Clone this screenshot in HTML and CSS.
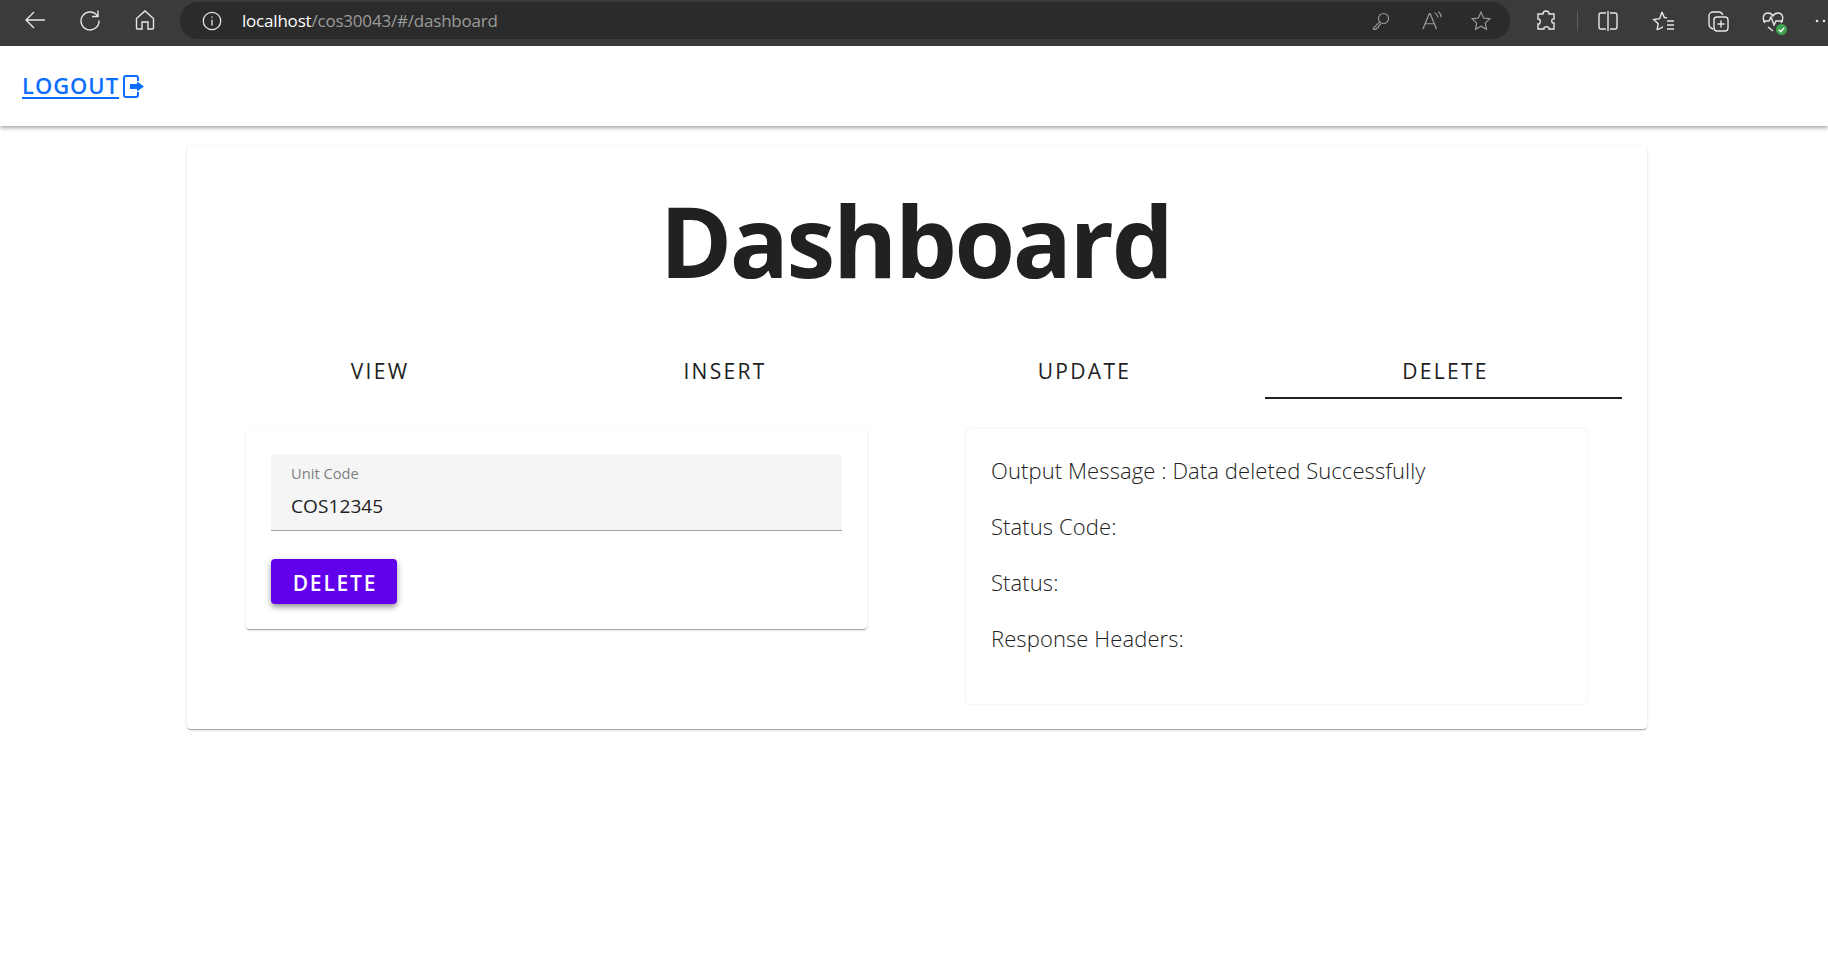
FILE: index.html
```html
<!DOCTYPE html>
<html lang="en">
<head>
<meta charset="utf-8">
<title>Dashboard</title>
<link rel="stylesheet" href="styles.css">
</head>
<body>
<header class="browser">
  <div class="nav-icons">
    <svg class="ico" viewBox="0 0 24 24"><path d="M22 12H3M11 4l-8 8 8 8"/></svg>
    <svg class="ico" viewBox="0 0 24 24"><path d="M19.5 8A9 9 0 1 0 21 12.5M20 2.500V8.500H14"/></svg>
    <svg class="ico" viewBox="0 0 24 24"><path d="M3.500 10.500L12 3l8.500 7.500V20a1 1 0 0 1-1 1H15v-7H9v7H4.500a1 1 0 0 1-1-1z"/></svg>
  </div>
  <div class="omnibox">
    <svg class="ico info" viewBox="0 0 24 24"><circle cx="12" cy="12" r="9.500"/><path d="M12 10.500V17M12 7v1.500"/></svg>
    <span class="url"><span class="host">localhost</span>/cos30043/#/dashboard</span>
    <div class="omni-actions">
      <svg class="ico dim small key" viewBox="0 0 24 24"><circle cx="15" cy="9" r="6"/><path d="M10.500 13L3 20.500V22h3l1-2h2v-2l3-2.500M16.500 7.500v.01"/></svg>
      <svg class="ico dim" viewBox="0 0 24 24"><path d="M2 21L9 4h1l7 17M5 15h10M15 3c2 1 3 3 3.500 5M19 2c2 1.500 3 4 3 6"/></svg>
      <svg class="ico dim" viewBox="0 0 24 24"><path d="M12 2.500l2.900 6.300 6.800.8-5 4.700 1.300 6.800-6-3.400-6 3.400 1.300-6.800-5-4.700 6.800-.8z"/></svg>
    </div>
  </div>
  <div class="tools">
    <svg class="ico tool-puzzle" viewBox="0 0 24 24"><path d="M9 5c0-4 6-4 6 0h5v5c-3-1-3 5 0 4v6h-5c1-3-6-3-5 0H4v-5c3 1 3-6 0-5V5z"/></svg>
    <span class="sep"></span>
    <svg class="ico tool-split" viewBox="0 0 24 24"><path d="M12 2v20M10 4H5a2 2 0 0 0-2 2v12a2 2 0 0 0 2 2h5M14 4h5a2 2 0 0 1 2 2v12a2 2 0 0 1-2 2h-5"/></svg>
    <svg class="ico tool-fav" viewBox="0 0 24 24"><path d="M10 3l2.300 5.500 2.700.2M5 21l1.200-6.200-4.500-4.300 6-.8L10 3M5 21l6-3.200M15 12h7M15 16h7M15 20h7"/></svg>
    <svg class="ico tool-coll" viewBox="0 0 24 24"><path d="M7 20C4 19 3 17 3 15V7a4 4 0 0 1 4-4h6c2 0 3 1 4 3"/><rect x="8" y="8" width="14" height="14" rx="3"/><path d="M15 11.500v7M11.500 15h7"/></svg>
    <span class="health">
      <svg class="ico" viewBox="0 0 24 24"><path d="M4 14C1 10 2 4 7 4c2 0 4 1 5 3 1-2 3-3 5-3 5 0 6 6 3 10M2 12h6l2-4 3 8 2-4h7M7 18l5 4"/></svg>
      <svg class="check" viewBox="0 0 10 10"><circle cx="5" cy="5" r="5"/><path d="M2.500 5.200l1.800 1.800 3.200-3.600"/></svg>
    </span>
    <svg class="dots" viewBox="0 0 12 4"><circle cx="2" cy="2" r="1.300"/><circle cx="9" cy="2" r="1.300"/></svg>
  </div>
</header>

<nav class="topnav">
  <a class="logout" href="#">LOGOUT</a>
  <svg class="logout-icon" viewBox="0 0 21 23"><path class="frame" d="M15 6V3A2 2 0 0 0 13 1H3A2 2 0 0 0 1 3v17a2 2 0 0 0 2 2h10a2 2 0 0 0 2-2v-3"/><path class="arrow" d="M7 9h7V6.500l7 5-7 5V14H7z"/></svg>
</nav>

<main class="page">
  <section class="card">
    <h1 class="title">Dashboard</h1>
    <div class="tabs">
      <div class="tab">VIEW</div>
      <div class="tab">INSERT</div>
      <div class="tab tab-update">UPDATE</div>
      <div class="tab tab-delete active">DELETE</div>
    </div>
    <div class="panels">
      <form class="panel form-panel">
        <div class="field">
          <span class="field-label">Unit Code</span>
          <span class="field-value">COS12345</span>
        </div>
        <span class="btn">DELETE</span>
      </form>
      <div class="panel output-panel">
        <p>Output Message : Data deleted Successfully</p>
        <p>Status Code:</p>
        <p>Status:</p>
        <p>Response Headers:</p>
      </div>
    </div>
  </section>
</main>
</body>
</html>
```

FILE: styles.css
```css
* { box-sizing: border-box; }
html, body { margin: 0; padding: 0; height: 100%; overflow: hidden; }
body { background: #fff; font-family: "Open Sans", sans-serif; color: #212121; }

.browser {
  height: 46px;
  background: #3b3b3b;
  display: flex;
  align-items: flex-start;
  padding-top: 2px;
  overflow: hidden;
  white-space: nowrap;
}
.ico { width: 24px; height: 24px; fill: none; stroke: #e6e6e6; stroke-width: 1.4; flex: none; }
.nav-icons { display: flex; gap: 31px; width: 180px; flex: none; padding: 6px 0 0 23px; }
.omnibox {
  width: 1330px;
  height: 37px;
  background: #2b2b2b;
  border-radius: 18px;
  display: flex;
  align-items: center;
  padding-left: 21px;
  flex: none;
}
.info { width: 22px; height: 22px; }
.url {
  margin-left: 19px;
  font-family: "Open Sans", sans-serif;
  font-size: 17px;
  letter-spacing: -0.2px;
  color: #9c9c9c;
}
.host { color: #fff; }
.omni-actions { margin-left: auto; display: flex; align-items: center; gap: 27px; padding-right: 18px; }
.key { margin-right: 3px; }
.dim { stroke: #9a9a9a; width: 22px; height: 22px; stroke-width: 1.3; }
.small { width: 20px; height: 20px; }
.tools { display: flex; align-items: center; height: 37px; padding-left: 24px; flex: none; }
.tool-puzzle { margin-right: 19px; }
.sep { width: 1px; height: 20px; background: #5f5f5f; margin-right: 18px; }
.tool-split { margin-right: 32px; }
.tool-fav { margin-right: 30px; }
.tool-coll { margin-right: 31px; }
.health { position: relative; display: block; width: 24px; height: 24px; margin-right: 30px; }
.check { position: absolute; right: -2px; bottom: -2px; width: 11px; height: 11px; }
.check circle { fill: #3fa34d; }
.check path { fill: none; stroke: #fff; stroke-width: 1.2; }
.dots { width: 12px; height: 4px; flex: none; fill: #e6e6e6; }

.topnav {
  height: 80px;
  background: #fff;
  box-shadow: 0 2px 4px rgba(0,0,0,.35);
  display: flex;
  align-items: center;
  padding-left: 22px;
  gap: 4px;
}
.logout {
  color: #0d6efd;
  font-size: 22px;
  font-weight: 600;
  letter-spacing: 0.95px;
  padding-bottom: 2px;
  text-decoration: underline;
  text-underline-offset: 3px;
}
.logout-icon { width: 21px; height: 23px; fill: none; }
.frame { stroke: #0d6efd; stroke-width: 2; }
.arrow { fill: #0d6efd; }

.page { padding: 20px 0 0 187px; }
.card {
  width: 1460px;
  height: 583px;
  background: #fff;
  border-radius: 4px;
  box-shadow: 0 2px 1px -1px rgba(0,0,0,.2), 0 1px 1px rgba(0,0,0,.14), 0 1px 3px rgba(0,0,0,.12);
  padding: 0 25px 0 22px;
}
.title {
  margin: 0;
  padding-top: 29px;
  height: 152px;
  text-align: center;
  font-size: 98px;
  line-height: 130px;
  font-weight: 700;
  letter-spacing: -2.4px;
  color: #212121;
}
.tabs {
  display: grid;
  grid-template-columns: 342px 348px 366px 357px;
  height: 101px;
}
.tab {
  height: 101px;
  border-bottom: 2px solid transparent;
  text-align: center;
  font-size: 21px;
  letter-spacing: 2.3px;
  line-height: 147px;
  color: #212121;
}
.tab-update { padding-left: 5px; }
.tab-delete { padding-left: 4px; }
.active { border-bottom-color: #212121; }
.panels { display: flex; margin-top: 30px; padding-left: 37px; gap: 99px; align-items: flex-start; }
.panel {
  width: 621px;
  background: #fff;
  border-radius: 4px;
  box-shadow: 0 2px 1px -1px rgba(0,0,0,.2), 0 1px 1px rgba(0,0,0,.14), 0 1px 3px rgba(0,0,0,.12);
}
.form-panel { height: 200px; padding: 25px; }
.field {
  height: 77px;
  background: #f5f5f5;
  border-bottom: 1px solid #a0a0a0;
  border-radius: 4px 4px 0 0;
  padding: 9px 20px 0;
  display: flex;
  flex-direction: column;
}
.field-label { font-size: 14.7px; line-height: 20px; color: #7f7f7f; }
.field-value { font-size: 19px; line-height: 32px; margin-top: 7px; letter-spacing: 0.1px; color: #212121; }
.btn {
  display: block;
  width: 126px;
  height: 45px;
  margin-top: 28px;
  background: #6200ee;
  color: #fff;
  border-radius: 4px;
  text-align: center;
  text-indent: 2px;
  font-size: 21px;
  font-weight: 600;
  letter-spacing: 1.8px;
  line-height: 49px;
  box-shadow: 0 3px 5px -1px rgba(0,0,0,.25), 0 4px 6px rgba(0,0,0,.16), 0 1px 8px rgba(0,0,0,.12);
}
.output-panel {
  height: 275px;
  padding: 21px 25px 0;
  font-size: 22px;
  font-weight: 300;
  letter-spacing: 0.1px;
  box-shadow: 0 0 2px rgba(0,0,0,.14);
}
.output-panel p { margin: 0; height: 56px; line-height: 40px; color: #212121; }
```
